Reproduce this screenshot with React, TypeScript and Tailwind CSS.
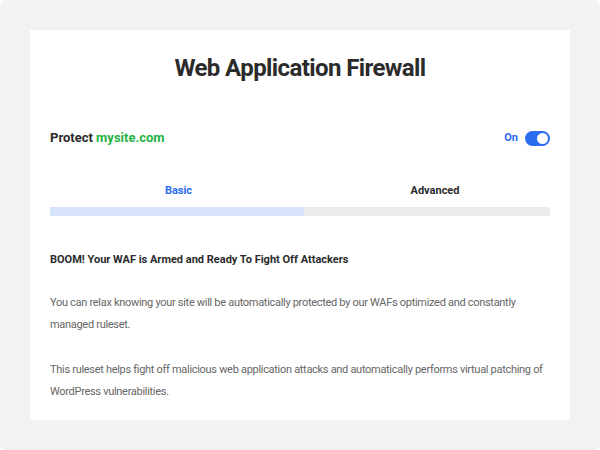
import React from 'react';

export default function App() {
  return (
    <div className="w-[600px] h-[450px] bg-white">
      <div
        className="w-full h-full bg-[#f2f2f2] rounded-md p-[30px]"
        style={{ fontFamily: 'Roboto, "Liberation Sans", sans-serif' }}
      >
        <div className="bg-white h-full px-5 pt-[22px]">
          <h1 className="text-center text-[24px] leading-8 font-bold tracking-[-0.6px] text-[#2b2b2b]">
            Web Application Firewall
          </h1>

          <div className="mt-[44px] flex items-center justify-between h-5">
            <div className="text-[13px] font-bold text-[#2b2b2b]">
              Protect <span className="text-[#1fb344]">mysite.com</span>
            </div>
            <div className="flex items-center gap-[7px]">
              <span className="text-[11px] font-bold text-[#2c6cf0]">On</span>
              <button className="w-[25px] h-[15px] rounded-full bg-[#2c6cf0] relative">
                <span className="absolute right-[2px] top-[2px] w-[11px] h-[11px] rounded-full bg-white" />
              </button>
            </div>
          </div>

          <div className="mt-[35px] flex text-[11px] font-bold leading-4">
            <div className="w-[254px] pl-[3px] text-center text-[#2c6cf0]">Basic</div>
            <div className="flex-1 pl-4 text-center text-[#2b2b2b]">Advanced</div>
          </div>
          <div className="mt-2 flex h-[9px]">
            <div className="w-[254px] bg-[#d6e3fa]" />
            <div className="flex-1 bg-[#ececec]" />
          </div>

          <h2 className="mt-[33px] text-[11px] leading-[22px] font-bold text-[#2b2b2b]">
            BOOM! Your WAF is Armed and Ready To Fight Off Attackers
          </h2>
          <p className="mt-[21px] text-[11px] leading-[22px] tracking-[-0.3px] text-[#666666]">
            You can relax knowing your site will be automatically protected by our WAFs optimized and constantly managed ruleset.
          </p>
          <p className="mt-[23px] text-[11px] leading-[22px] tracking-[-0.3px] text-[#666666]">
            This ruleset helps fight off malicious web application attacks and automatically performs virtual patching of WordPress vulnerabilities.
          </p>
        </div>
      </div>
    </div>
  );
}
